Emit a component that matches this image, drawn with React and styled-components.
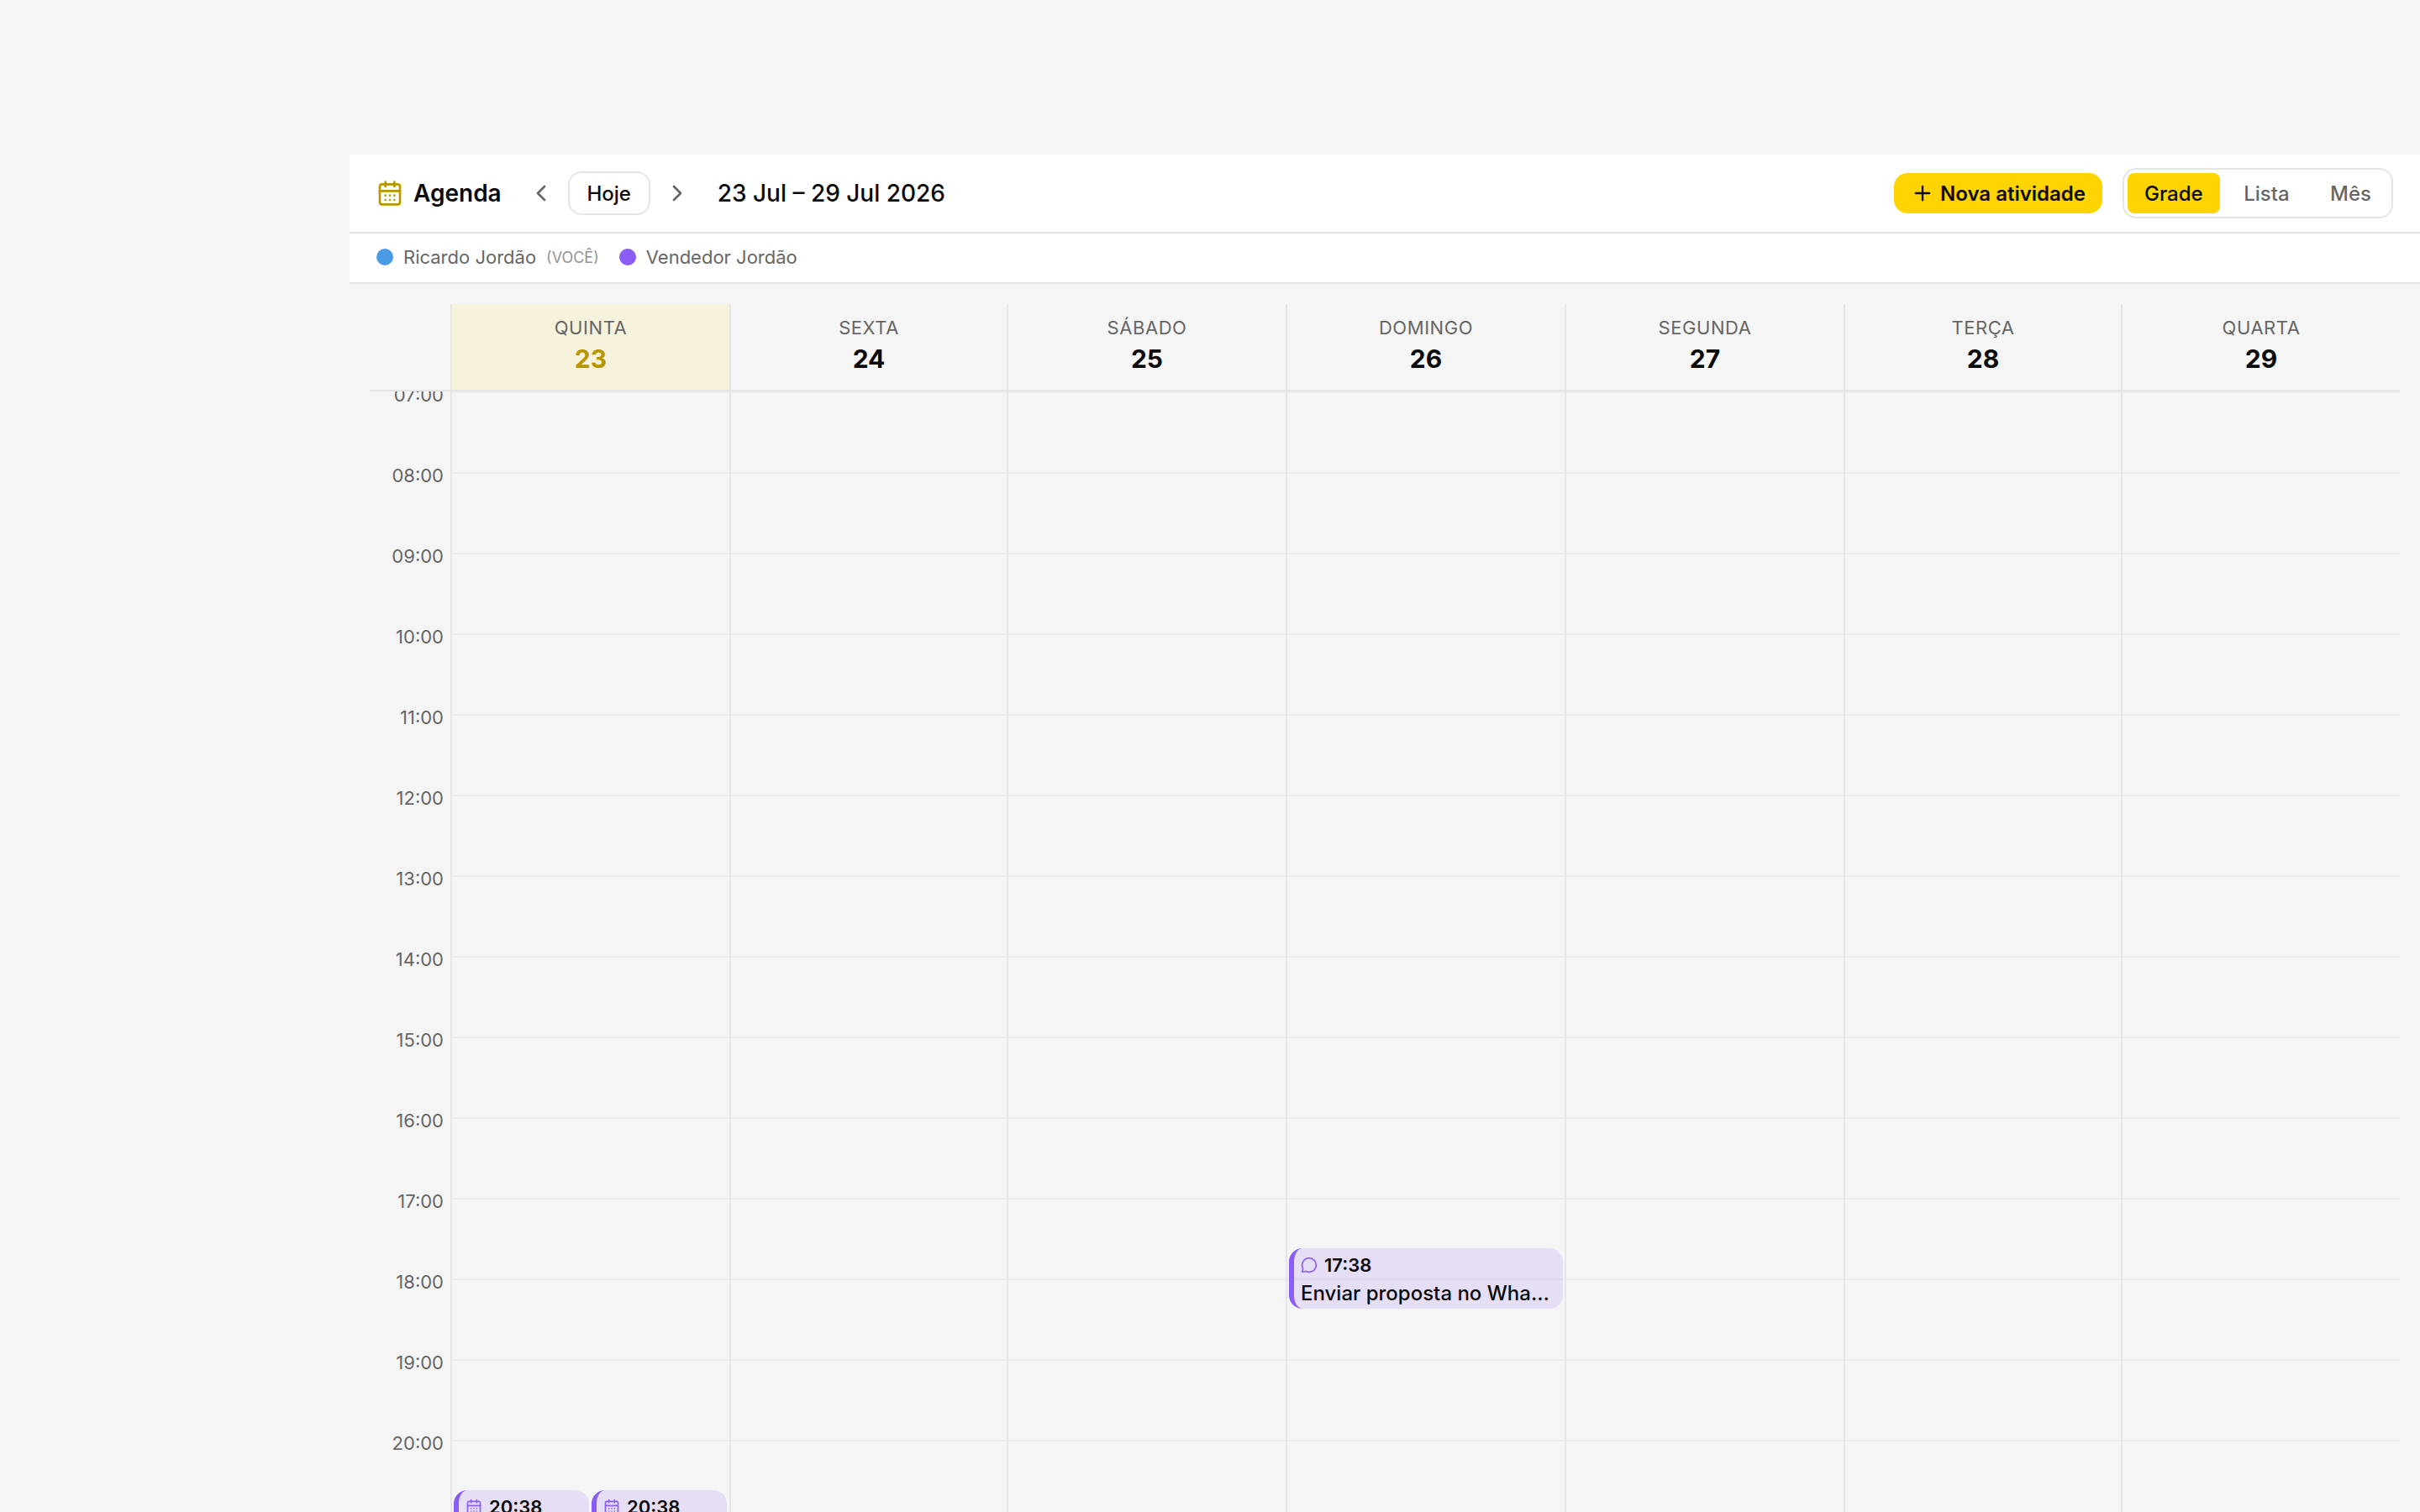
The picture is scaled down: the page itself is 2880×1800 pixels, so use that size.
import React, { useState } from 'react'
import styled, { createGlobalStyle } from 'styled-components'
import { CalendarDays, ChevronLeft, ChevronRight, MessageCircle, Plus } from 'lucide-react'

const HOUR_HEIGHT = 96
const FIRST_HOUR = 7

const people = [
    { id: 1, name: 'Ricardo Jordão', color: '#4a9be6', you: true },
    { id: 2, name: 'Vendedor Jordão', color: '#8b5cf6' },
]

const days = [
    { name: 'Quinta', number: 23, today: true },
    { name: 'Sexta', number: 24 },
    { name: 'Sábado', number: 25 },
    { name: 'Domingo', number: 26 },
    { name: 'Segunda', number: 27 },
    { name: 'Terça', number: 28 },
    { name: 'Quarta', number: 29 },
]

const events = [
    { id: 1, day: 26, time: '17:38', title: 'Enviar proposta no WhatsApp', icon: MessageCircle, slot: 0, slots: 1 },
    { id: 2, day: 23, time: '20:38', title: 'Reunião', icon: CalendarDays, slot: 0, slots: 2 },
    { id: 3, day: 23, time: '20:38', title: 'Reunião', icon: CalendarDays, slot: 1, slots: 2 },
]

const hours = Array.from({ length: 14 }, (_, i) => FIRST_HOUR + i)
const views = ['Grade', 'Lista', 'Mês']

const GlobalStyle = createGlobalStyle`
    * {
        box-sizing: border-box;
    }
    body {
        margin: 0;
        background-color: #f5f5f5;
        color: #0a0a0a;
        font-family: Inter, "Liberation Sans", sans-serif;
    }
    button {
        font-family: inherit;
        color: inherit;
        margin: 0;
        cursor: pointer;
    }
`
const Page = styled.div`
    height: 100vh;
    padding: 184px 0 0 416px;
    overflow: hidden;
`
const Panel = styled.main`
    height: 100%;
    display: flex;
    flex-direction: column;
`
const Toolbar = styled.header`
    height: 94px;
    flex-shrink: 0;
    display: flex;
    align-items: center;
    justify-content: space-between;
    padding: 0 32px;
    background-color: #ffffff;
    border-bottom: 2px solid #e5e5e5;
`
const Group = styled.div`
    display: flex;
    align-items: center;
    gap: ${props => props.$gap}px;
`
const Title = styled.h1`
    display: flex;
    align-items: center;
    gap: 12px;
    margin: 0;
    font-size: 28px;
    font-weight: 600;
    svg {
        color: #b89600;
    }
`
const Arrow = styled.button`
    display: flex;
    padding: 8px;
    border: none;
    background: none;
    color: #666666;
`
const Today = styled.button`
    width: 98px;
    height: 52px;
    padding: 0;
    border: 2px solid #e5e5e5;
    border-radius: 16px;
    background-color: #ffffff;
    font-size: 24px;
    font-weight: 500;
`
const Range = styled.span`
    margin-left: 1px;
    font-size: 28px;
    font-weight: 500;
`
const NewButton = styled.button`
    height: 48px;
    display: flex;
    align-items: center;
    gap: 7px;
    padding: 0 20px;
    border: none;
    border-radius: 16px;
    background-color: #ffd400;
    font-size: 24px;
    font-weight: 600;
`
const Switcher = styled.div`
    width: 322px;
    height: 60px;
    display: flex;
    justify-content: space-between;
    padding: 4px;
    border: 2px solid #e5e5e5;
    border-radius: 16px;
`
const View = styled.button`
    padding: 0 20px;
    border: none;
    border-radius: 8px;
    background-color: ${props => props.$active ? '#ffd400' : 'transparent'};
    color: ${props => props.$active ? '#0a0a0a' : '#666666'};
    font-size: 24px;
    font-weight: 500;
`
const Legend = styled.div`
    height: 60px;
    flex-shrink: 0;
    display: flex;
    align-items: center;
    gap: 24px;
    padding: 0 32px 2px;
    background-color: #ffffff;
    border-bottom: 2px solid #e5e5e5;
`
const Person = styled.div`
    display: flex;
    align-items: center;
    gap: 12px;
    color: #666666;
    font-size: 22px;
`
const Dot = styled.span`
    width: 20px;
    height: 20px;
    border-radius: 50%;
    background-color: ${props => props.$color};
`
const You = styled.small`
    font-size: 18px;
    opacity: 0.7;
    text-transform: uppercase;
`
const Calendar = styled.section`
    flex: 1;
    min-height: 0;
    display: flex;
    flex-direction: column;
    padding: 24px 24px 0;
`
const Week = styled.div`
    display: grid;
    grid-template-columns: 96px 332px 330px repeat(3, 332px) 330px 332px;
`
const HeadRow = styled(Week)`
    height: 104px;
    flex-shrink: 0;
    border-bottom: 2px solid #e5e5e5;
`
const DayHead = styled.div`
    padding-top: 12px;
    border-left: 2px solid #e5e5e5;
    background-color: ${props => props.$today ? '#f7f2dc' : 'transparent'};
    text-align: center;
`
const DayName = styled.div`
    line-height: 32px;
    font-size: 22px;
    letter-spacing: 0.55px;
    text-transform: uppercase;
    color: #666666;
`
const DayNumber = styled.div`
    line-height: 42px;
    font-size: 30px;
    font-weight: 700;
    color: ${props => props.$today ? '#b89600' : '#0a0a0a'};
`
const Body = styled(Week)`
    flex: 1;
    min-height: 0;
    overflow: hidden;
`
const Gutter = styled.div`
    display: flex;
    flex-direction: column;
`
const HourLabel = styled.div`
    height: ${HOUR_HEIGHT}px;
    flex-shrink: 0;
    padding-right: 8px;
    text-align: right;
    font-size: 22px;
    line-height: 32px;
    color: #666666;
    span {
        display: block;
        margin-top: -12px;
    }
`
const DayColumn = styled.div`
    position: relative;
    border-left: 2px solid #e5e5e5;
`
const Slot = styled.div`
    height: ${HOUR_HEIGHT}px;
    border-top: 2px solid #ececec;
`
const EventCard = styled.div`
    position: absolute;
    height: 72px;
    padding: 4px 12px 0 8px;
    overflow: hidden;
    border-left: 6px solid #8b5cf6;
    border-radius: 16px;
    background-color: rgba(139, 92, 246, 0.15);
`
const EventTime = styled.div`
    display: flex;
    align-items: center;
    gap: 8px;
    font-size: 22px;
    font-weight: 600;
    line-height: 32px;
    svg {
        color: #8b5cf6;
    }
`
const EventTitle = styled.div`
    font-size: 24px;
    font-weight: 500;
    line-height: 36px;
    white-space: nowrap;
    overflow: hidden;
    text-overflow: ellipsis;
`

const eventPlace = ({ time, slot, slots }) => {
    const [h, m] = time.split(':').map(Number)
    return {
        top: Math.floor((h - FIRST_HOUR + m / 60) * HOUR_HEIGHT),
        left: `calc(${(slot / slots) * 100}% + ${2 - slot}px)`,
        width: `calc(${100 / slots}% - 4px)`,
    }
}

const App = () => {
    const [view, setView] = useState('Grade')

    return (
        <Page>
            <GlobalStyle />
            <Panel>
                <Toolbar>
                    <Group $gap={23}>
                        <Title>
                            <CalendarDays size={32} />
                            Agenda
                        </Title>
                        <Group $gap={8}>
                            <Arrow aria-label="Anterior"><ChevronLeft size={32} /></Arrow>
                            <Today>Hoje</Today>
                            <Arrow aria-label="Próximo"><ChevronRight size={32} /></Arrow>
                        </Group>
                        <Range>23 Jul – 29 Jul 2026</Range>
                    </Group>
                    <Group $gap={24}>
                        <NewButton>
                            <Plus size={28} />
                            Nova atividade
                        </NewButton>
                        <Switcher>
                            {views.map((item) => (
                                <View key={item} $active={item === view} onClick={() => setView(item)}>
                                    {item}
                                </View>
                            ))}
                        </Switcher>
                    </Group>
                </Toolbar>
                <Legend>
                    {people.map((person) => (
                        <Person key={person.id}>
                            <Dot $color={person.color} />
                            {person.name}
                            {person.you && <You>(você)</You>}
                        </Person>
                    ))}
                </Legend>
                <Calendar>
                    <HeadRow>
                        <div />
                        {days.map((day) => (
                            <DayHead key={day.number} $today={day.today}>
                                <DayName>{day.name}</DayName>
                                <DayNumber $today={day.today}>{day.number}</DayNumber>
                            </DayHead>
                        ))}
                    </HeadRow>
                    <Body>
                        <Gutter>
                            {hours.map((hour) => (
                                <HourLabel key={hour}>
                                    <span>{String(hour).padStart(2, '0')}:00</span>
                                </HourLabel>
                            ))}
                        </Gutter>
                        {days.map((day) => (
                            <DayColumn key={day.number}>
                                {hours.map((hour) => <Slot key={hour} />)}
                                {events.filter((e) => e.day === day.number).map((e) => (
                                    <EventCard key={e.id} style={eventPlace(e)}>
                                        <EventTime>
                                            <e.icon size={20} />
                                            {e.time}
                                        </EventTime>
                                        <EventTitle>{e.title}</EventTitle>
                                    </EventCard>
                                ))}
                            </DayColumn>
                        ))}
                    </Body>
                </Calendar>
            </Panel>
        </Page>
    )
}

export default App
